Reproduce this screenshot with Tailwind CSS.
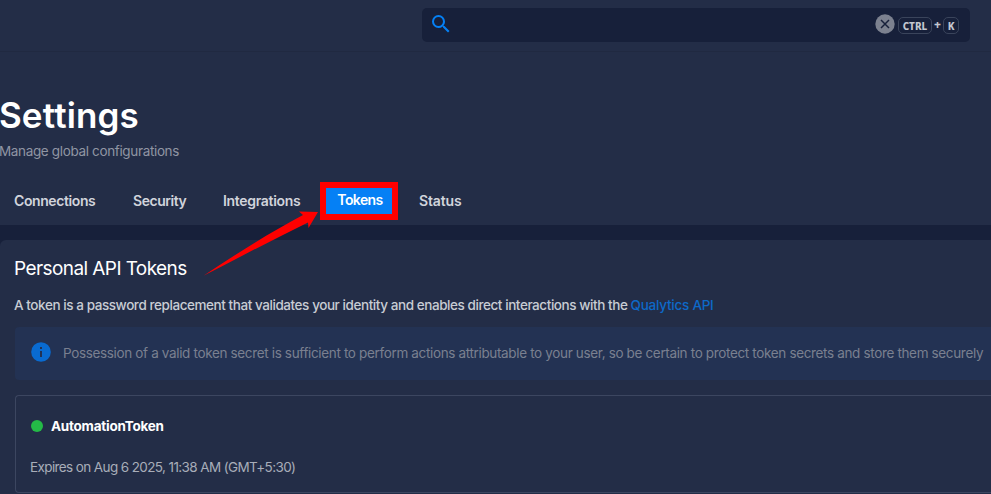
<!DOCTYPE html>
<html lang="en">
<head>
<meta charset="utf-8">
<title>Settings</title>
<script src="https://cdn.jsdelivr.net/npm/@tailwindcss/browser@4"></script>
</head>
<body class="w-[991px] h-[494px] overflow-hidden bg-[#17203a] font-['Inter',sans-serif] text-white relative">
<header class="h-[52px] bg-[#232d47] border-b border-[#202941] pl-[422px] pt-2">
  <div class="w-[548px] h-[34px] rounded-[5px] bg-[#17203a] flex items-center pl-[7px] pr-[11px]">
    <svg class="size-6 -mt-0.5" viewBox="0 0 24 24" fill="#0580f5"><path d="M9.500 3A6.500 6.500 0 0 1 16 9.500c0 1.610-.59 3.090-1.560 4.230l.27.270h.790l5 5-1.500 1.500-5-5v-.79l-.27-.27A6.516 6.516 0 0 1 9.500 16 6.500 6.500 0 0 1 3 9.500 6.500 6.500 0 0 1 9.500 3m0 2C7 5 5 7 5 9.500S7 14 9.500 14 14 12 14 9.500 12 5 9.500 5"/></svg>
    <svg class="size-5 ml-auto mr-[3px] -mt-0.5" viewBox="0 0 20 20"><circle cx="10" cy="10" r="9.700" fill="#7c818f"/><path d="M6 6l8 8M14 6l-8 8" stroke="#17203a" stroke-width="1.500"/></svg>
    <div class="flex items-center font-['Noto_Sans',sans-serif] font-extrabold text-[10px] text-[#c3c7d0] leading-none mt-px">
      <span class="w-[34px] h-[17px] rounded-[5px] border border-[#3a445b] flex items-center justify-center">CTRL</span>
      <span class="w-[11px] text-center text-[12px] -mt-px">+</span>
      <span class="w-4 h-[17px] rounded-[5px] border border-[#3a445b] flex items-center justify-center">K</span>
    </div>
  </div>
</header>
<section class="h-[173px] bg-[#232d47] pt-[42px]">
  <h1 class="h-[42px] leading-[42px] text-[35px] font-semibold tracking-[0.1px] whitespace-nowrap -ml-px">Se<span class="tracking-[-0.8px]">t</span>tings</h1>
  <p class="h-5 mt-[5px] leading-5 text-[13.5px] tracking-[-0.35px] text-[#9095a3] whitespace-nowrap -ml-px">Manage global configurations</p>
  <nav class="flex mt-[21px] h-[38px] items-center text-[14px] font-semibold text-[#d1d4dc] whitespace-nowrap">
    <a class="ml-[14px] -mt-0.5 w-[119px] tracking-[-0.4px]">Connections</a>
    <a class="-mt-0.5 w-[90px] tracking-[-0.46px]">Security</a>
    <a class="-mt-0.5 w-[97px] tracking-[-0.32px]">Integrations</a>
    <a class="w-[78px] h-[38px] border-[6px] border-[#fe0000] bg-[#0580f5] text-white flex items-center justify-center pl-[2px] pb-[3px] tracking-[-0.6px]">Tokens</a>
    <a class="ml-[21px] -mt-0.5 tracking-[-0.15px]">Status</a>
  </nav>
</section>
<main class="mt-[15px] h-[254px] rounded-tl-[6px] bg-[#232d47] pl-[15px] pt-[15px] whitespace-nowrap">
  <h2 class="h-[27px] leading-[27px] text-[19px] tracking-[-0.58px] -ml-px">Personal API Tokens</h2>
  <p class="mt-[13px] -ml-px h-5 leading-5 text-[13.5px] font-medium text-[#c8ccd4]"><span class="tracking-[-0.43px]">A token is a password replacement that validates your identity and enables direct interactions with the </span><a class="text-[#0d69c8] tracking-[-0.25px]">Qualytics API</a></p>
  <div class="mt-3 h-[53px] rounded-l-[4px] bg-[#233253] flex items-center pl-[14px]">
    <svg class="size-6 shrink-0 -mt-[3px]" viewBox="0 0 24 24"><circle cx="12" cy="12" r="9.800" fill="#096bd1"/><path d="M11 7h2v2h-2zM11 11h2v6h-2z" fill="#233253"/></svg>
    <p class="ml-[10px] text-[13.5px] tracking-[-0.348px] text-[#7a8090]">Possession of a valid token secret is sufficient to perform actions attributable to your user, so be certain to protect token secrets and store them securely</p>
  </div>
  <article class="mt-[15px] h-[98px] border border-r-0 border-[#3c4660] rounded-l-[4px] pl-[15px] pt-5">
    <div class="flex items-center h-5"><i class="size-3 rounded-full bg-[#24ba47]"></i><b class="ml-2 mt-px text-[13.5px] font-bold tracking-[-0.24px]">AutomationToken</b></div>
    <p class="mt-[21px] -ml-px h-5 leading-5 text-[13.5px] tracking-[-0.61px] text-[#a8adb9]">Expires on Aug 6 2025, 11:38 AM (GMT+5:30)</p>
  </article>
</main>
<svg class="absolute left-0 top-0 pointer-events-none" width="340" height="290"><path d="M203.500 275.800C236 254 269 233 303 215L299 211.500 318 212 308.500 228 308 222.500C273 239.500 238 258 203.500 275.800Z" fill="#fe0000"/></svg>
</body>
</html>
